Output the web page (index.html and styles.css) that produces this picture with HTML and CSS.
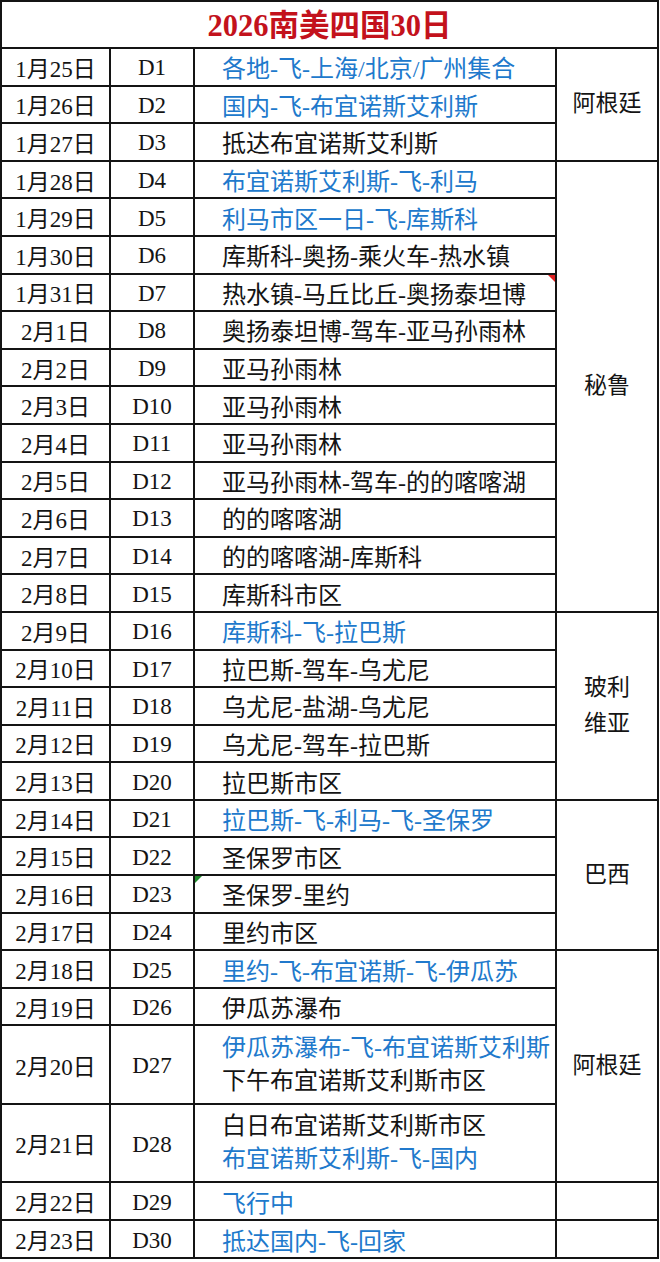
FILE: index.html
```html
<!DOCTYPE html>
<html lang="zh-CN">
<head>
<meta charset="utf-8">
<title>2026南美四国30日</title>
<link rel="stylesheet" href="styles.css">
</head>
<body>
<div class="sheet">
  <div class="title">2026南美四国30日</div>

  <div class="c date">1月25日</div><div class="c day">D1</div><div class="c plan blue">各地-飞-上海/北京/广州集合</div>
  <div class="c region span3">阿根廷</div>
  <div class="c date">1月26日</div><div class="c day">D2</div><div class="c plan blue">国内-飞-布宜诺斯艾利斯</div>
  <div class="c date">1月27日</div><div class="c day">D3</div><div class="c plan">抵达布宜诺斯艾利斯</div>

  <div class="c date">1月28日</div><div class="c day">D4</div><div class="c plan blue">布宜诺斯艾利斯-飞-利马</div>
  <div class="c region span12">秘鲁</div>
  <div class="c date">1月29日</div><div class="c day">D5</div><div class="c plan blue">利马市区一日-飞-库斯科</div>
  <div class="c date">1月30日</div><div class="c day">D6</div><div class="c plan">库斯科-奥扬-乘火车-热水镇</div>
  <div class="c date">1月31日</div><div class="c day">D7</div><div class="c plan">热水镇-马丘比丘-奥扬泰坦博<span class="flag-red"></span></div>
  <div class="c date">2月1日</div><div class="c day">D8</div><div class="c plan">奥扬泰坦博-驾车-亚马孙雨林</div>
  <div class="c date">2月2日</div><div class="c day">D9</div><div class="c plan">亚马孙雨林</div>
  <div class="c date">2月3日</div><div class="c day">D10</div><div class="c plan">亚马孙雨林</div>
  <div class="c date">2月4日</div><div class="c day">D11</div><div class="c plan">亚马孙雨林</div>
  <div class="c date">2月5日</div><div class="c day">D12</div><div class="c plan">亚马孙雨林-驾车-的的喀喀湖</div>
  <div class="c date">2月6日</div><div class="c day">D13</div><div class="c plan">的的喀喀湖</div>
  <div class="c date">2月7日</div><div class="c day">D14</div><div class="c plan">的的喀喀湖-库斯科</div>
  <div class="c date">2月8日</div><div class="c day">D15</div><div class="c plan">库斯科市区</div>

  <div class="c date">2月9日</div><div class="c day">D16</div><div class="c plan blue">库斯科-飞-拉巴斯</div>
  <div class="c region span5">玻利<br>维亚</div>
  <div class="c date">2月10日</div><div class="c day">D17</div><div class="c plan">拉巴斯-驾车-乌尤尼</div>
  <div class="c date">2月11日</div><div class="c day">D18</div><div class="c plan">乌尤尼-盐湖-乌尤尼</div>
  <div class="c date">2月12日</div><div class="c day">D19</div><div class="c plan">乌尤尼-驾车-拉巴斯</div>
  <div class="c date">2月13日</div><div class="c day">D20</div><div class="c plan">拉巴斯市区</div>

  <div class="c date">2月14日</div><div class="c day">D21</div><div class="c plan blue">拉巴斯-飞-利马-飞-圣保罗</div>
  <div class="c region span4">巴西</div>
  <div class="c date">2月15日</div><div class="c day">D22</div><div class="c plan">圣保罗市区</div>
  <div class="c date">2月16日</div><div class="c day">D23</div><div class="c plan"><span class="flag-green"></span>圣保罗-里约</div>
  <div class="c date">2月17日</div><div class="c day">D24</div><div class="c plan">里约市区</div>

  <div class="c date">2月18日</div><div class="c day">D25</div><div class="c plan blue">里约-飞-布宜诺斯-飞-伊瓜苏</div>
  <div class="c region span4">阿根廷</div>
  <div class="c date">2月19日</div><div class="c day">D26</div><div class="c plan">伊瓜苏瀑布</div>
  <div class="c date">2月20日</div><div class="c day">D27</div><div class="c plan two"><span class="blue">伊瓜苏瀑布-飞-布宜诺斯艾利斯</span><span>下午布宜诺斯艾利斯市区</span></div>
  <div class="c date">2月21日</div><div class="c day">D28</div><div class="c plan two"><span>白日布宜诺斯艾利斯市区</span><span class="blue">布宜诺斯艾利斯-飞-国内</span></div>

  <div class="c date">2月22日</div><div class="c day">D29</div><div class="c plan blue">飞行中</div>
  <div class="c region"></div>
  <div class="c date">2月23日</div><div class="c day">D30</div><div class="c plan blue">抵达国内-飞-回家</div>
  <div class="c region"></div>
</div>
</body>
</html>
```

FILE: styles.css
```css
html, body {
  margin: 0;
  padding: 0;
  background: #ffffff;
}

body {
  font-family: "Liberation Serif", "Noto Sans CJK SC", serif;
  color: #141414;
}

.sheet {
  width: 659px;
  box-sizing: border-box;
  display: grid;
  grid-template-columns: 107px 82px 360px 100px;
  grid-template-rows: 45px repeat(26, 35.6px) 76.5px 76.5px 36px 35.5px;
  gap: 2px;
  padding: 2px;
  background: #141414;
}

.title {
  grid-column: 1 / span 4;
  background: #ffffff;
  display: flex;
  align-items: center;
  justify-content: center;
  font-size: 30.5px;
  font-weight: bold;
  color: #c3121c;
  padding-bottom: 3px;
}

.c {
  background: #ffffff;
  display: flex;
  align-items: center;
  position: relative;
  white-space: nowrap;
}

.date {
  justify-content: center;
  font-size: 23px;
}

.day {
  justify-content: center;
  font-size: 23px;
  padding-top: 3px;
}

.plan {
  padding-left: 27px;
  font-size: 24px;
}

.plan.two {
  flex-direction: column;
  align-items: flex-start;
  justify-content: center;
  line-height: 33px;
}

.blue {
  color: #2079cc;
}

.region {
  justify-content: center;
  text-align: center;
  font-size: 23px;
  line-height: 36px;
}

.span3 { grid-row: span 3; }
.span4 { grid-row: span 4; }
.span5 { grid-row: span 5; }
.span12 { grid-row: span 12; }

.flag-red {
  position: absolute;
  top: 0;
  right: 0;
  width: 0;
  height: 0;
  border-top: 7px solid #e02020;
  border-left: 7px solid transparent;
}

.flag-green {
  position: absolute;
  top: 0;
  left: 0;
  width: 0;
  height: 0;
  border-top: 7px solid #1e8a2a;
  border-right: 7px solid transparent;
}
```
